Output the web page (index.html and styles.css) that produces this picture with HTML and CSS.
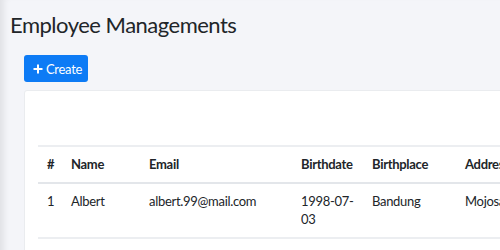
FILE: index.html
```html
<!DOCTYPE html>
<html lang="en">
<head>
    <meta charset="UTF-8">
    <title>Employee Managements</title>
    <link rel="stylesheet" href="styles.css">
</head>
<body>

<div class="main">
    <h1 class="page-title">Employee Managements</h1>

    <div class="content">
        <button class="btn-create" type="button">
            <svg width="10" height="10" viewBox="0 0 10 10"><path d="M5 0.5v9M0.5 5h9" stroke="#fff" stroke-width="2"/></svg>
            Create
        </button>

        <div class="card">
            <table class="emp-table">
                <thead>
                    <tr>
                        <th class="col-no">#</th>
                        <th class="col-name">Name</th>
                        <th class="col-email">Email</th>
                        <th class="col-bdate">Birthdate</th>
                        <th class="col-bplace">Birthplace</th>
                        <th class="col-addr">Address</th>
                    </tr>
                </thead>
                <tbody>
                    <tr>
                        <td>1</td>
                        <td>Albert</td>
                        <td>albert.99@mail.com</td>
                        <td>1998-07-03</td>
                        <td>Bandung</td>
                        <td>Mojosari Bekonang</td>
                    </tr>
                </tbody>
            </table>
        </div>
    </div>
</div>

</body>
</html>
```

FILE: styles.css
```css
html, body {
    margin: 0;
    height: 100%;
    overflow: hidden;
}
body {
    font-family: 'Lato', 'Noto Sans', sans-serif;
    background: #f4f5f9;
    color: #212529;
}
.main {
    min-height: 100%;
    padding-left: 10px;
    box-shadow: inset 8px 0 6px -4px rgba(0,0,0,0.08);
}
.page-title {
    margin: 0;
    padding-top: 10px;
    font-size: 22px;
    letter-spacing: -0.5px;
    font-weight: 400;
    line-height: 30px;
}
.content {
    padding-left: 14px;
    margin-top: 15px;
}
.btn-create {
    display: flex;
    align-items: center;
    gap: 3px;
    height: 27px;
    width: 64px;
    padding: 0 0 0 9px;
    border: none;
    border-radius: 3px;
    background: #0d7bf5;
    color: #fff;
    font-family: inherit;
    font-size: 13px;
    letter-spacing: -0.3px;
    cursor: pointer;
}
.card {
    margin-top: 8px;
    width: 700px;
    background: #fff;
    border: 1px solid #eaecef;
    border-radius: 3px;
    padding: 54px 13px 20px;
}
.emp-table {
    width: 100%;
    table-layout: fixed;
    border-collapse: collapse;
    font-size: 13px;
    letter-spacing: -0.3px;
    line-height: 18px;
    text-align: left;
}
.emp-table th, .emp-table td {
    box-sizing: border-box;
    padding: 8px 9px 9px;
    vertical-align: top;
    border-top: 2px solid #eceef1;
}
.emp-table th {
    font-weight: 700;
    border-bottom: 2px solid #e3e6ea;
}
.emp-table tbody td {
    border-bottom: 2px solid #eceef1;
}
.col-no { width: 24px; }
.col-name { width: 78px; }
.col-email { width: 152px; }
.col-bdate { width: 71px; }
.col-bplace { width: 93px; }
```
